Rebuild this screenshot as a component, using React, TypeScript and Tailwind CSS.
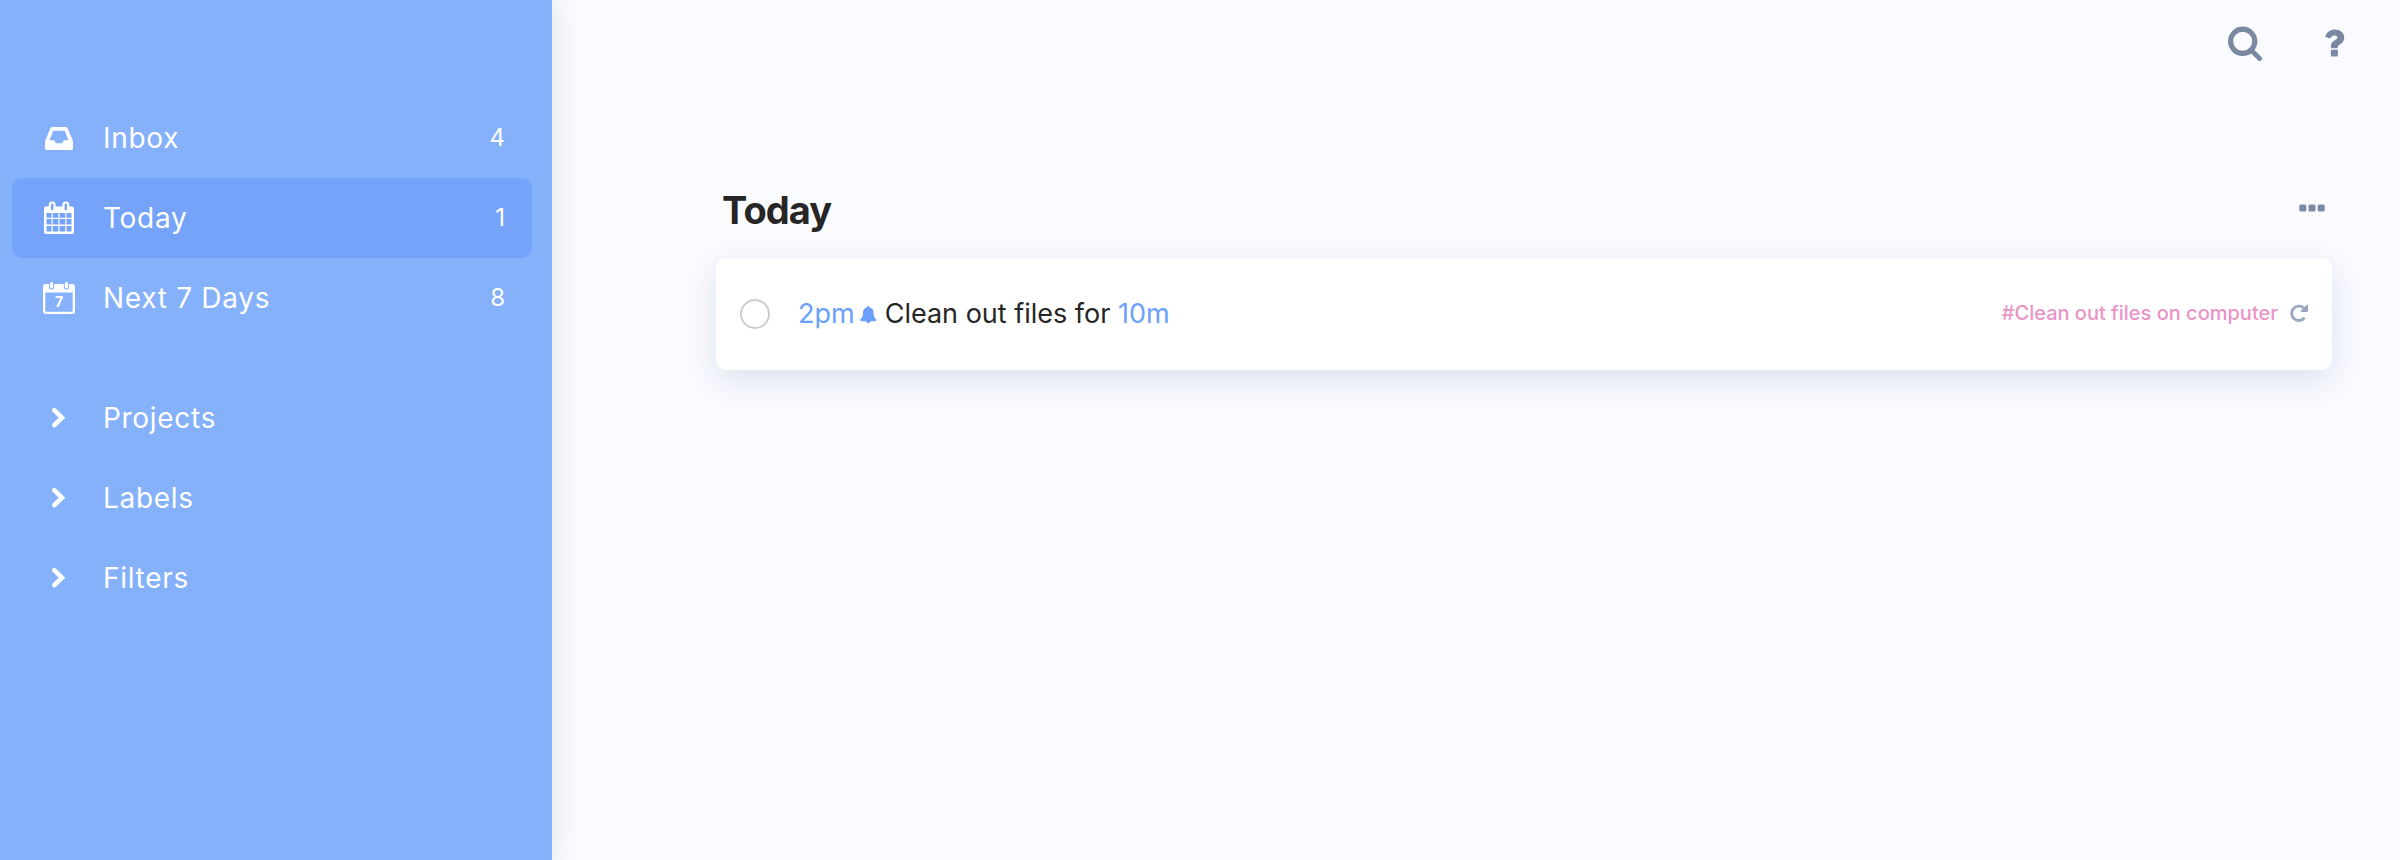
import type { ReactNode } from "react";

function InboxIcon() {
  return (
    <svg width="32" height="32" viewBox="0 0 32 32" fill="currentColor" aria-hidden="true">
      <path
        fillRule="evenodd"
        d="M9.400 5h13.200c1 0 1.700.6 2.100 1.600l4.600 11c.4.900.7 1.700.7 2.600V26.500c0 .9-.6 1.500-1.500 1.500H3.500c-.9 0-1.500-.6-1.500-1.500v-6.300c0-.9.300-1.700.7-2.600l4.600-11C7.700 5.600 8.400 5 9.400 5ZM10.300 8.700 6.500 18.200h4.700l1.600 3h6.400l1.600-3h4.700l-3.800-9.500Z"
      />
    </svg>
  );
}

function CalendarIcon() {
  return (
    <svg width="32" height="34" viewBox="0 0 32 34" aria-hidden="true">
      <path
        fill="currentColor"
        fillRule="evenodd"
        d="M3 5.500h26a2 2 0 0 1 2 2V31a2 2 0 0 1-2 2H3a2 2 0 0 1-2-2V7.500a2 2 0 0 1 2-2ZM3.500 12v4.700h5V12ZM9.700 12v4.700h5.700V12ZM16.600 12v4.700h5.700V12ZM23.500 12v4.700h5V12ZM3.500 18v5.500h5V18ZM9.700 18v5.500h5.700V18ZM16.600 18v5.500h5.700V18ZM23.500 18v5.500h5V18ZM3.500 25v5.500h5V25ZM9.700 25v5.500h5.700V25ZM16.600 25v5.500h5.700V25ZM23.500 25v5.500h5V25Z"
      />
      <rect x="5.800" y="0.500" width="6.800" height="10" rx="3.400" fill="currentColor" />
      <rect x="19.400" y="0.500" width="6.800" height="10" rx="3.400" fill="currentColor" />
      <rect x="8" y="2.500" width="2.400" height="6.800" rx="1.200" fill="#74a3f9" />
      <rect x="21.600" y="2.500" width="2.400" height="6.800" rx="1.200" fill="#74a3f9" />
    </svg>
  );
}

function WeekIcon() {
  return (
    <svg width="32" height="32" viewBox="0 0 32 32" aria-hidden="true">
      <path
        fill="currentColor"
        fillRule="evenodd"
        d="M3 2h26a3 3 0 0 1 3 3v24a3 3 0 0 1-3 3H3a3 3 0 0 1-3-3V5a3 3 0 0 1 3-3ZM2.300 10.600v17.900a1.200 1.200 0 0 0 1.200 1.200h25a1.200 1.200 0 0 0 1.200-1.200V10.600Z"
      />
      <rect x="6" y="-2" width="5.200" height="9.500" rx="2.600" fill="#85b0fa" />
      <rect x="20.800" y="-2" width="5.200" height="9.500" rx="2.600" fill="#85b0fa" />
      <rect x="7" y="0" width="3.200" height="6.600" rx="1.600" fill="currentColor" />
      <rect x="21.800" y="0" width="3.200" height="6.600" rx="1.600" fill="currentColor" />
      <text x="16" y="25" fontSize="14" fontWeight="700" textAnchor="middle" fill="currentColor">
        7
      </text>
    </svg>
  );
}

function ChevronIcon() {
  return (
    <svg width="32" height="32" viewBox="0 0 32 32" fill="none" aria-hidden="true">
      <path
        d="m11.300 8.200 7.700 7.500-7.700 7.500"
        stroke="currentColor"
        strokeWidth="4.600"
        strokeLinecap="round"
      />
    </svg>
  );
}

function SearchIcon() {
  return (
    <svg width="36" height="36" viewBox="0 0 36 36" fill="none" stroke="currentColor" aria-hidden="true">
      <circle cx="15.700" cy="16.300" r="12.100" strokeWidth="5.200" />
      <path d="m24 25 8.700 8.600" strokeWidth="4.800" strokeLinecap="round" />
    </svg>
  );
}

function HelpIcon() {
  return (
    <svg width="20" height="28" viewBox="0 0 20 28" fill="currentColor" aria-hidden="true">
      <path d="M.4 6.700C2.300 3 5.400.5 10 .5c5 0 9.300 3.200 9.300 8.100 0 3.500-1.900 5.400-4.400 6.900-1.800 1-2.100 1.700-2.100 2.500 0 .8-.4 1.300-1 1.300H6.900c-.6 0-1-.4-1-1v-1c0-3 1.600-4.700 4.300-6.200 1.700-1 2.200-1.400 2.200-2.500 0-1.300-1.300-2-2.800-2-1.900 0-2.700.8-4 2.400-.4.500-.9.500-1.300.2L.7 7.900c-.4-.3-.6-.8-.3-1.200Z" />
      <rect x="5.900" y="20.800" width="7" height="6.700" rx="1" />
    </svg>
  );
}

function DotsIcon() {
  return (
    <svg width="28" height="8" viewBox="0 0 28 8" fill="currentColor" aria-hidden="true">
      <rect x="1.300" y="0.500" width="7" height="7" rx="1.600" />
      <rect x="10.500" y="0.500" width="7" height="7" rx="1.600" />
      <rect x="19.700" y="0.500" width="7" height="7" rx="1.600" />
    </svg>
  );
}

function BellIcon() {
  return (
    <svg width="18" height="20" viewBox="0 0 18 20" fill="currentColor" aria-hidden="true">
      <path d="M9.300 2c.6 0 1.100.5 1.100 1.200 2.700.5 4.200 2.600 4.200 5.500 0 3.700 1.100 5.600 2.700 6.900.2.900-.5 1.700-1.400 1.700h-4.600c0 1.200-.9 2-2 2s-2-.8-2-2H2.700c-.9 0-1.600-.8-1.400-1.700C2.900 14.300 4 12.400 4 8.700c0-2.900 1.500-5 4.200-5.500C8.200 2.500 8.700 2 9.300 2Z" />
    </svg>
  );
}

function RepeatIcon() {
  return (
    <svg width="18" height="18" viewBox="0 0 18 18" fill="none" aria-hidden="true">
      <path d="M14.600 13.700A7.200 7.200 0 1 1 13.600 3.900" stroke="currentColor" strokeWidth="2.900" />
      <path d="M18 1.200v6c0 .4-.3.700-.7.700h-6c-.7 0-1-.8-.5-1.200l6-6c.4-.5 1.200-.2 1.200.5Z" fill="currentColor" />
    </svg>
  );
}

interface NavItemProps {
  icon: ReactNode;
  label: string;
  count?: number;
  active?: boolean;
}

function NavItem({ icon, label, count, active }: NavItemProps) {
  return (
    <li>
      <a
        href="#"
        className={`flex h-20 items-center rounded-[10px] pr-[27px] pl-[31px] ${active ? "bg-[#74a3f9]" : ""}`}
      >
        <span className="flex w-8 justify-center">{icon}</span>
        <span className="ml-7 flex-1 text-[28px] leading-10 tracking-wide">{label}</span>
        {count !== undefined && <span className="text-2xl">{count}</span>}
      </a>
    </li>
  );
}

export default function App() {
  const views = [
    { label: "Inbox", count: 4, icon: <InboxIcon /> },
    { label: "Today", count: 1, icon: <CalendarIcon />, active: true },
    { label: "Next 7 Days", count: 8, icon: <WeekIcon /> },
  ];
  const groups = ["Projects", "Labels", "Filters"];

  return (
    <div className="flex min-h-screen bg-[#fafbff] font-['Inter',sans-serif] text-[#262626]">
      <aside className="w-[552px] shrink-0 bg-[#85b0fa] pt-[98px] pr-5 pl-3 text-white shadow-[0_0_32px_rgba(0,0,0,0.11)]">
        <nav className="flex flex-col gap-10">
          <ul>
            {views.map((item) => (
              <NavItem key={item.label} {...item} />
            ))}
          </ul>
          <ul>
            {groups.map((label) => (
              <NavItem key={label} label={label} icon={<ChevronIcon />} />
            ))}
          </ul>
        </nav>
      </aside>

      <div className="min-w-0 flex-1">
        <header className="flex h-[86px] items-center justify-end gap-[62px] pr-[55px] text-[#7a88a1]">
          <button type="button" aria-label="Search">
            <SearchIcon />
          </button>
          <button type="button" aria-label="Help">
            <HelpIcon />
          </button>
        </header>

        <main className="pt-24 pr-[68px] pl-[164px]">
          <div className="flex items-center justify-between pr-[6px] pl-[6px]">
            <h1 className="text-[38px] leading-[56px] font-bold tracking-tight">Today</h1>
            <button type="button" aria-label="More options" className="pb-1 text-[#7a88a1]">
              <DotsIcon />
            </button>
          </div>

          <ul className="mt-5">
            <li className="flex h-28 items-center rounded-[10px] bg-white pr-6 pl-6 shadow-[0_10px_32px_rgba(60,95,145,0.16)]">
              <input
                type="checkbox"
                id="task"
                className="size-[30px] shrink-0 appearance-none rounded-full border-2 border-[#cccccc]"
              />
              <label htmlFor="task" className="ml-7 flex items-center text-[27px] leading-10">
                <span className="text-[#6a9ffb]">2pm</span>
                <span className="mx-1 text-[#6a9ffb]">
                  <BellIcon />
                </span>
                <span className="ml-1">
                  Clean out files for <span className="text-[#6a9ffb]">10m</span>
                </span>
              </label>
              <div className="ml-auto flex items-center gap-3 pb-[2px]">
                <a href="#" className="text-xl font-medium text-[#ea94c6]">
                  #Clean out files on computer
                </a>
                <span className="text-[#9ba8bd]">
                  <RepeatIcon />
                </span>
              </div>
            </li>
          </ul>
        </main>
      </div>
    </div>
  );
}
